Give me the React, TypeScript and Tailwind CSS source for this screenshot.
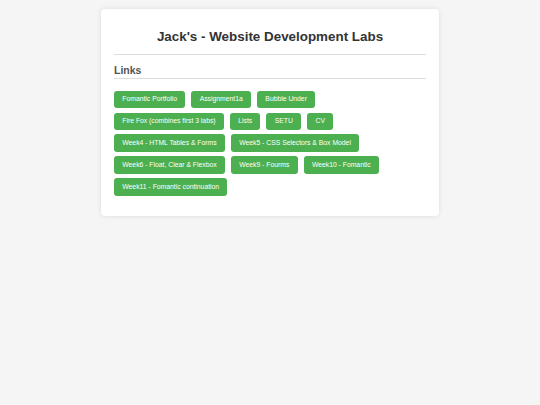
const links = [
  "Fomantic Portfolio",
  "Assignment1a",
  "Bubble Under",
  "Fire Fox (combines first 3 labs)",
  "Lists",
  "SETU",
  "CV",
  "Week4 - HTML Tables & Forms",
  "Week5 - CSS Selectors & Box Model",
  "Week6 - Float, Clear & Flexbox",
  "Week9 - Fourms",
  "Week10 - Fomantic",
  "Week11 - Fomantic continuation",
];

export default function App() {
  return (
    <div className="min-h-[405px] bg-[#f5f5f5] pt-[8.7px] font-['Liberation_Sans',Arial,sans-serif]">
      <div className="mx-auto w-[338px] rounded-[4px] bg-white px-[13px] pt-[20.7px] pb-[20.7px] shadow-[0_0_5px_rgba(0,0,0,0.1)]">
        <h1 className="border-b border-[#ddd] pb-[8.6px] text-center text-[13.4px] leading-[16px] font-bold text-[#333]">
          Jack's - Website Development Labs
        </h1>
        <h2 className="mt-[9px] border-b border-[#ddd] pb-[2.5px] text-[10.5px] leading-[12px] font-bold text-[#555]">
          Links
        </h2>
        <div className="mt-[11.2px] flex flex-wrap gap-x-[6px] gap-y-[4.4px]">
          {links.map((l) => (
            <a
              key={l}
              href="#"
              className="flex h-[17.5px] items-center rounded-[3px] bg-[#4caf50] px-[8.3px] text-[6.8px] leading-none text-white"
            >
              {l}
            </a>
          ))}
        </div>
      </div>
    </div>
  );
}
